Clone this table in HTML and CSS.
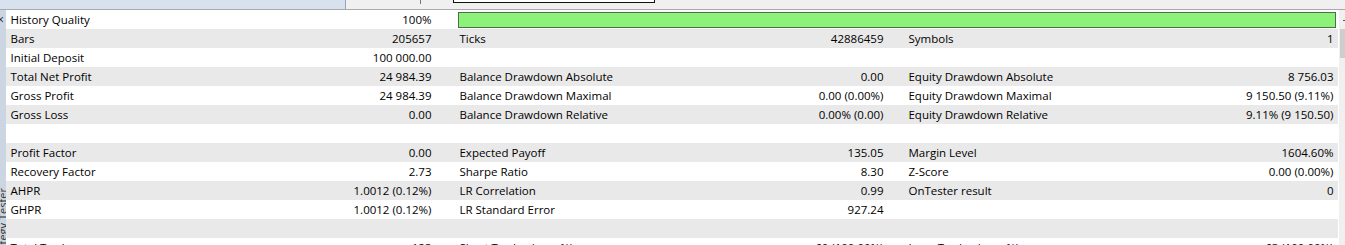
FILE: index.html
```html
<!DOCTYPE html>
<html>
<head>
<meta charset="utf-8">
<link rel="stylesheet" href="styles.css">
</head>
<body>
<div class="topbar">
  <div class="tab"></div>
  <div class="tb-mid"><span class="tick"></span></div>
  <div class="combo"></div>
</div>
<div class="main">
  <div class="side">
    <span class="close">×</span>
    <span class="vtext">Strategy Tester</span>
  </div>
  <div class="table">
    <div class="row">
      <div class="cell c1"><span>History Quality</span><span>100%</span></div>
      <div class="barcell"><div class="bar"></div></div>
    </div>
    <div class="row">
      <div class="cell c1"><span>Bars</span><span>205657</span></div>
      <div class="cell c2"><span>Ticks</span><span>42886459</span></div>
      <div class="cell c3"><span>Symbols</span><span>1</span></div>
    </div>
    <div class="row">
      <div class="cell c1"><span>Initial Deposit</span><span>100 000.00</span></div>
      <div class="cell c2"></div>
      <div class="cell c3"></div>
    </div>
    <div class="row">
      <div class="cell c1"><span>Total Net Profit</span><span>24 984.39</span></div>
      <div class="cell c2"><span>Balance Drawdown Absolute</span><span>0.00</span></div>
      <div class="cell c3"><span>Equity Drawdown Absolute</span><span>8 756.03</span></div>
    </div>
    <div class="row">
      <div class="cell c1"><span>Gross Profit</span><span>24 984.39</span></div>
      <div class="cell c2"><span>Balance Drawdown Maximal</span><span>0.00 (0.00%)</span></div>
      <div class="cell c3"><span>Equity Drawdown Maximal</span><span>9 150.50 (9.11%)</span></div>
    </div>
    <div class="row">
      <div class="cell c1"><span>Gross Loss</span><span>0.00</span></div>
      <div class="cell c2"><span>Balance Drawdown Relative</span><span>0.00% (0.00)</span></div>
      <div class="cell c3"><span>Equity Drawdown Relative</span><span>9.11% (9 150.50)</span></div>
    </div>
    <div class="row">
      <div class="cell c1"></div><div class="cell c2"></div><div class="cell c3"></div>
    </div>
    <div class="row">
      <div class="cell c1"><span>Profit Factor</span><span>0.00</span></div>
      <div class="cell c2"><span>Expected Payoff</span><span>135.05</span></div>
      <div class="cell c3"><span>Margin Level</span><span>1604.60%</span></div>
    </div>
    <div class="row">
      <div class="cell c1"><span>Recovery Factor</span><span>2.73</span></div>
      <div class="cell c2"><span>Sharpe Ratio</span><span>8.30</span></div>
      <div class="cell c3"><span>Z-Score</span><span>0.00 (0.00%)</span></div>
    </div>
    <div class="row">
      <div class="cell c1"><span>AHPR</span><span>1.0012 (0.12%)</span></div>
      <div class="cell c2"><span>LR Correlation</span><span>0.99</span></div>
      <div class="cell c3"><span>OnTester result</span><span>0</span></div>
    </div>
    <div class="row">
      <div class="cell c1"><span>GHPR</span><span>1.0012 (0.12%)</span></div>
      <div class="cell c2"><span>LR Standard Error</span><span>927.24</span></div>
      <div class="cell c3"></div>
    </div>
    <div class="row">
      <div class="cell c1"></div><div class="cell c2"></div><div class="cell c3"></div>
    </div>
    <div class="row">
      <div class="cell c1"><span>Total Trades</span><span>123</span></div>
      <div class="cell c2"><span>Short Trades (won %)</span><span>60 (100.00%)</span></div>
      <div class="cell c3"><span>Long Trades (won %)</span><span>63 (100.00%)</span></div>
    </div>
  </div>
  <div class="scroll">
    <span class="arrow"></span>
    <div class="thumb"></div>
  </div>
</div>
</body>
</html>
```
FILE: styles.css
```css
html, body {
  margin: 0;
  padding: 0;
  background: #ffffff;
  overflow: hidden;
  width: 1345px;
  height: 245px;
}
body {
  font-family: "Open Sans", "Noto Sans", sans-serif;
  font-size: 11.5px;
  color: #000;
}
.topbar {
  display: flex;
  height: 9px;
  background: #f0f0f0;
  border-bottom: 1px solid #a9a9a9;
}
.tab {
  width: 345px;
  background: #d7e2ee;
  border-right: 1px solid #9aa6b2;
}
.tb-mid {
  width: 105px;
  display: flex;
  justify-content: flex-end;
  padding-right: 30px;
  box-sizing: border-box;
}
.tick {
  width: 1px;
  height: 4px;
  background: #777;
}
.combo {
  width: 200px;
  height: 2px;
  margin-left: 2px;
  border: 1px solid #111;
  border-top: none;
  background: #fff;
}
.main {
  display: flex;
  height: 235px;
}
.side {
  width: 7px;
  background: #cbd6e2;
  overflow: hidden;
  display: flex;
  flex-direction: column;
}
.close {
  font-size: 12px;
  line-height: 16px;
  margin-top: 2px;
  margin-left: -3px;
  color: #222;
}
.vtext {
  margin-top: 160px;
  margin-left: -5px;
  writing-mode: vertical-rl;
  transform: rotate(180deg);
  font-size: 11px;
  color: #333;
  white-space: nowrap;
}
.table {
  width: 1332px;
  display: flex;
  flex-direction: column;
}
.row {
  display: grid;
  grid-template-columns: 450px 449px 433px;
  height: 19px;
  flex: none;
  line-height: 19px;
}
.row:nth-child(even) {
  background: #e9e9e9;
}
.cell {
  display: flex;
  justify-content: space-between;
  white-space: nowrap;
}
.c1 { padding: 0 25px 0 4px; }
.c2 { padding: 0 22px 0 3px; }
.c3 { padding: 0 5px 0 3px; }
.barcell {
  grid-column: 2 / 4;
  padding: 2px 2px 1px 2px;
}
.bar {
  height: 100%;
  box-sizing: border-box;
  background: #8cf27a;
  border: 1px solid #4c6e48;
}
.scroll {
  width: 6px;
  background: #f0f0f0;
  border-left: 1px solid #fff;
  display: flex;
  flex-direction: column;
  align-items: flex-end;
}
.arrow {
  width: 2px;
  height: 1px;
  background: #555;
  margin-top: 10px;
}
.thumb {
  width: 5px;
  height: 29px;
  margin-top: 8px;
  background: #cdcdcd;
}
```
